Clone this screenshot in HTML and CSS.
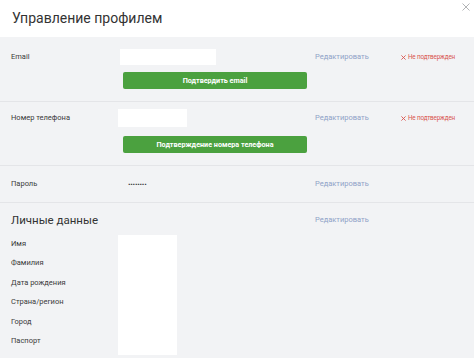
FILE: index.html
```html
<!DOCTYPE html>
<html lang="ru">
<head>
<meta charset="utf-8">
<link rel="stylesheet" href="styles.css">
</head>
<body>
<div class="modal">
  <div class="header">
    <h1 class="title">Управление профилем</h1>
    <svg class="close" width="8" height="8" viewBox="0 0 8 8"><path d="M0.5 0.5 L7.5 7.5 M7.5 0.5 L0.5 7.5" stroke="#a9abae" stroke-width="0.9" fill="none"/></svg>
  </div>
  <div class="section sec-email">
    <div class="row">
      <div class="label">Email</div>
      <div class="field">
        <div class="input input-email"></div>
        <div class="btn">Подтвердить email</div>
      </div>
      <div class="edit">Редактировать</div>
      <div class="status"><svg class="x-icon" width="5" height="5" viewBox="0 0 5 5"><path d="M0.4 0.4 L4.6 4.6 M4.6 0.4 L0.4 4.6" stroke="#d9534f" stroke-width="0.9" fill="none"/></svg><span>Не подтвержден</span></div>
    </div>
  </div>
  <div class="section sec-phone">
    <div class="row">
      <div class="label">Номер телефона</div>
      <div class="field">
        <div class="input input-phone"></div>
        <div class="btn btn-phone">Подтверждение номера телефона</div>
      </div>
      <div class="edit">Редактировать</div>
      <div class="status"><svg class="x-icon" width="5" height="5" viewBox="0 0 5 5"><path d="M0.4 0.4 L4.6 4.6 M4.6 0.4 L0.4 4.6" stroke="#d9534f" stroke-width="0.9" fill="none"/></svg><span>Не подтвержден</span></div>
    </div>
  </div>
  <div class="section sec-pass">
    <div class="row">
      <div class="label">Пароль</div>
      <div class="field"><span class="dots">........</span></div>
      <div class="edit">Редактировать</div>
    </div>
  </div>
  <div class="section sec-personal">
    <div class="row head-row">
      <h2 class="subtitle">Личные данные</h2>
      <div class="edit">Редактировать</div>
    </div>
    <div class="personal-body">
      <div class="plabels">
        <div>Имя</div>
        <div>Фамилия</div>
        <div>Дата рождения</div>
        <div>Страна/регион</div>
        <div>Город</div>
        <div>Паспорт</div>
      </div>
      <div class="pbox"></div>
    </div>
  </div>
</div>
</body>
</html>
```
FILE: styles.css
```css
html, body {
  margin: 0;
  padding: 0;
  background: #ffffff;
}
body {
  font-family: Roboto, "Liberation Sans", Arial, sans-serif;
  color: #333333;
  width: 474px;
  height: 358px;
  overflow: hidden;
}
.modal {
  position: relative;
  width: 474px;
  height: 358px;
  background: #f2f3f5;
}
.header {
  position: relative;
  height: 37px;
  background: #ffffff;
  display: flex;
  align-items: center;
  padding-left: 12px;
  box-sizing: border-box;
}
.title {
  margin: 0;
  font-size: 14px;
  font-weight: 400;
  color: #333333;
  line-height: 18px;
  margin-top: -1px;
}
.close {
  position: absolute;
  top: 3px;
  right: 4px;
}
.section {
  border-bottom: 1px solid #e4e5e8;
  padding-left: 11px;
}
.row {
  display: grid;
  grid-template-columns: 107px 197px 86px 1fr;
  align-items: start;
}
.label {
  font-size: 7.5px;
  line-height: 16px;
  color: #3a3a3a;
}
.field {
  display: flex;
  flex-direction: column;
}
.input {
  background: #ffffff;
}
.input-email {
  width: 96px;
  height: 16px;
  margin-left: 2px;
}
.input-phone {
  width: 69px;
  height: 18px;
}
.btn {
  margin-left: 5px;
  margin-top: 7px;
  width: 184px;
  height: 17px;
  background: #4ba13f;
  border-radius: 2px;
  color: #ffffff;
  font-size: 7.2px;
  font-weight: 700;
  line-height: 17px;
  text-align: center;
}
.btn-phone {
  margin-top: 9px;
}
.edit {
  font-size: 7.5px;
  line-height: 16px;
  color: #8fa2c7;
}
.status {
  display: flex;
  align-items: center;
  gap: 2px;
  height: 16px;
  font-size: 6.3px;
  letter-spacing: -0.15px;
  color: #d9534f;
  white-space: nowrap;
}
.sec-email {
  padding-top: 12px;
  padding-bottom: 12px;
}
.sec-phone {
  padding-top: 7px;
  padding-bottom: 12px;
}
.sec-phone .label,
.sec-phone .edit {
  line-height: 18px;
}
.sec-phone .status {
  height: 18px;
}
.sec-pass {
  padding-top: 12px;
  padding-bottom: 12px;
}
.sec-pass .label,
.sec-pass .edit {
  line-height: 12px;
}
.dots {
  margin-left: 10px;
  font-size: 9px;
  font-weight: 700;
  line-height: 12px;
  letter-spacing: -0.3px;
  position: relative;
  top: -2px;
}
.sec-personal {
  border-bottom: none;
  padding-top: 8px;
}
.head-row {
  grid-template-columns: 304px 1fr;
  align-items: center;
}
.subtitle {
  margin: 0;
  font-size: 11.5px;
  font-weight: 400;
  line-height: 18px;
  color: #333333;
}
.personal-body {
  display: flex;
  margin-top: 5px;
}
.plabels {
  width: 107px;
  font-size: 7.5px;
  line-height: 19.4px;
  color: #3a3a3a;
}
.pbox {
  margin-top: 1px;
  width: 59px;
  height: 120px;
  background: #ffffff;
}
```
